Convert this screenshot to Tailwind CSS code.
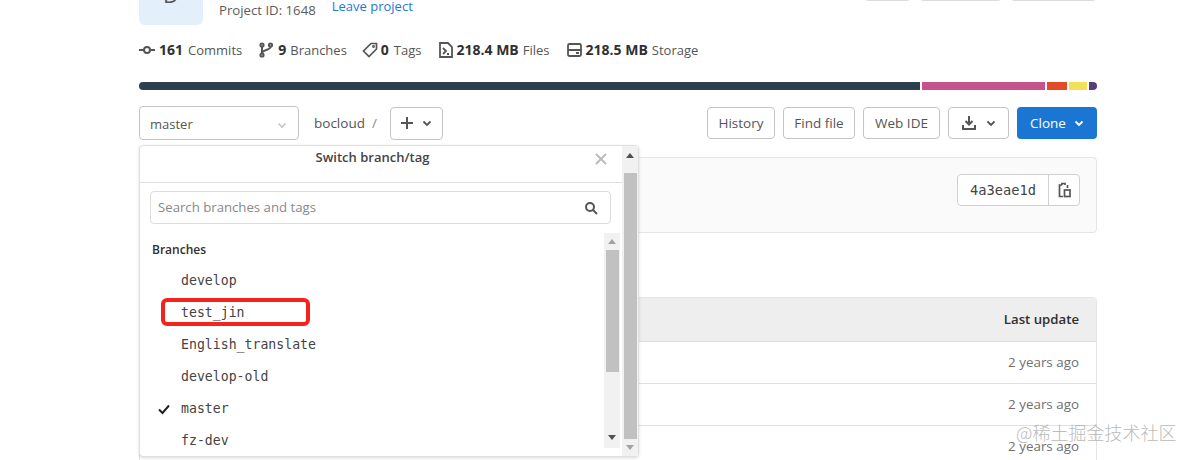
<!DOCTYPE html>
<html lang="en">
<head>
  <meta charset="UTF-8" />
  <title>bocloud</title>
  <script src="https://cdn.jsdelivr.net/npm/@tailwindcss/browser@4"></script>
</head>
<body class="bg-white">
  <div class="relative h-[460px] w-[1192px] overflow-hidden font-['Open_Sans','Noto_Sans',sans-serif] text-[13.5px] text-[#303030]">
    <main class="ml-[139px] w-[958px]">

      <!-- project header, cut off by the top of the picture -->
      <div class="-mt-[39px] flex h-[64px] items-start">
        <div class="flex h-[64px] w-[64px] items-end justify-center rounded-md bg-[#e3f0fb] pb-[20px] text-[22px] leading-none text-[#555]">D</div>
        <div class="ml-[16px] mt-[39px] text-[13.2px] leading-[20px] text-[#5c5c5c]">Project ID: 1648</div>
        <a class="ml-[16px] mt-[35px] text-[13px] leading-[20px] text-[#1f78d1]">Leave project</a>
        <div class="ml-auto flex items-start gap-[8px] pt-[20px]">
          <div class="h-[20px] w-[47px] rounded border border-[#dcdcdc]"></div>
          <div class="flex h-[20px] w-[83px] rounded border border-[#dcdcdc]"><div class="w-[59px] border-r border-[#dcdcdc]"></div></div>
          <div class="flex h-[20px] w-[87px] rounded border border-[#dcdcdc]"><div class="w-[63px] border-r border-[#dcdcdc]"></div></div>
        </div>
      </div>

      <!-- stats -->
      <div class="mt-[15px] flex h-[20px] items-center text-[13px] text-[#555]">
        <svg class="mr-[4px] h-[16px] w-[16px]" viewBox="0 0 16 16" fill="none" stroke="#555" stroke-width="2"><circle cx="8" cy="8" r="3"/><path d="M0 8h5M11 8h5"/></svg>
        <span class="flex items-baseline"><b class="mr-[5px] text-[14px] font-bold text-[#303030]">161</b>Commits</span>
        <svg class="ml-[17px] mr-[5px] h-[16px] w-[14px]" viewBox="0 0 14 16" fill="none" stroke="#555" stroke-width="2"><circle cx="3" cy="3" r="1.6"/><circle cx="3" cy="13" r="1.6"/><circle cx="11.5" cy="3" r="1.6"/><path d="M3 5v6M11.5 5c0 3-8.500 3-8.500 6"/></svg>
        <span class="flex items-baseline"><b class="mr-[4px] text-[14px] font-bold text-[#303030]">9</b>Branches</span>
        <svg class="ml-[15px] mr-[3px] h-[16px] w-[16px]" viewBox="0 0 16 16" fill="none" stroke="#555" stroke-width="1.700"><path d="M9 1.500h5.500V7L7 14.500 1.500 9z"/><circle cx="11.500" cy="4.500" r="0.600"/></svg>
        <span class="flex items-baseline"><b class="mr-[5px] text-[14px] font-bold text-[#303030]">0</b>Tags</span>
        <svg class="ml-[17px] mr-[4px] h-[16px] w-[14px]" viewBox="0 0 14 16" fill="none" stroke="#555" stroke-width="1.800"><path d="M1 1h8l4 4v10H1z"/><path d="M4 6l3 3-3 3M8 12h2"/></svg>
        <span class="flex items-baseline"><b class="mr-[4px] text-[14px] font-bold text-[#303030]">218.4 MB</b>Files</span>
        <svg class="ml-[17px] mr-[4px] h-[16px] w-[15px]" viewBox="0 0 15 16" fill="none" stroke="#555" stroke-width="1.800"><rect x="1" y="2" width="13" height="12" rx="1.500"/><path d="M1 8h13M9 11h3"/></svg>
        <span class="flex items-baseline"><b class="mr-[4px] text-[14px] font-bold text-[#303030]">218.5 MB</b>Storage</span>
      </div>

      <!-- language bar -->
      <div class="mt-[22px] flex h-[8px] gap-[2px] overflow-hidden rounded-full">
        <div class="w-[781px] bg-[#2c3e50]"></div>
        <div class="w-[123px] bg-[#c6538c]"></div>
        <div class="w-[20px] bg-[#e34c26]"></div>
        <div class="w-[18px] bg-[#f1e05a]"></div>
        <div class="w-[8px] bg-[#563d7c]"></div>
      </div>

      <!-- toolbar -->
      <div class="mt-[16px] flex h-[34px] items-center">
        <div class="flex h-[34px] w-[160px] items-center justify-between rounded border border-[#c4c4c4] pl-[10px] pr-[11px] pt-[3px] text-[13px] text-[#555]">
          master
          <svg class="h-[10px] w-[10px]" viewBox="0 0 10 10" fill="none" stroke="#c4c4c4" stroke-width="1.600"><path d="M1.500 3.500L5 7l3.500-3.500"/></svg>
        </div>
        <span class="ml-[15px] text-[#555]">bocloud</span>
        <span class="ml-[7px] text-[#888]">/</span>
        <div class="ml-[13px] flex h-[33px] w-[53px] items-center justify-center gap-[8px] rounded border border-[#c4c4c4]">
          <svg class="h-[14px] w-[14px]" viewBox="0 0 14 14" fill="none" stroke="#555" stroke-width="2"><path d="M7 1v12M1 7h12"/></svg>
          <svg class="h-[10px] w-[10px]" viewBox="0 0 10 10" fill="none" stroke="#555" stroke-width="1.800"><path d="M1.500 3.500L5 7l3.500-3.500"/></svg>
        </div>
        <div class="ml-auto flex gap-[8px] text-[#555]">
          <div class="flex h-[32px] w-[68px] items-center justify-center rounded border border-[#c4c4c4]">History</div>
          <div class="flex h-[32px] w-[72px] items-center justify-center rounded border border-[#c4c4c4]">Find file</div>
          <div class="flex h-[32px] w-[77px] items-center justify-center rounded border border-[#c4c4c4]">Web IDE</div>
          <div class="flex h-[32px] w-[61px] items-center justify-center gap-[10px] rounded border border-[#c4c4c4]">
            <svg class="h-[14px] w-[14px]" viewBox="0 0 14 14" fill="none" stroke="#555" stroke-width="2"><path d="M7 0v8M3.500 5L7 8.500 10.500 5M1 9v4h12V9"/></svg>
            <svg class="h-[10px] w-[10px]" viewBox="0 0 10 10" fill="none" stroke="#555" stroke-width="1.800"><path d="M1.500 3.500L5 7l3.500-3.500"/></svg>
          </div>
          <div class="flex h-[32px] w-[80px] items-center justify-center gap-[8px] rounded bg-[#1b76d3] text-white">
            Clone
            <svg class="h-[10px] w-[10px]" viewBox="0 0 10 10" fill="none" stroke="#fff" stroke-width="1.800"><path d="M1.500 3.500L5 7l3.500-3.500"/></svg>
          </div>
        </div>
      </div>

      <!-- last commit box -->
      <div class="mt-[17px] flex h-[76px] items-start justify-end rounded border border-[#e5e5e5] bg-[#fafafa] pr-[16px] pt-[16px]">
        <div class="flex h-[32px] w-[123px] rounded border border-[#d0d0d0] bg-white">
          <div class="flex w-[91px] items-center justify-center border-r border-[#d0d0d0] font-['DejaVu_Sans_Mono',monospace] text-[13.7px] text-[#444]">4a3eae1d</div>
          <div class="flex flex-1 items-center justify-center">
            <svg class="h-[16px] w-[13px]" viewBox="0 0 13 16" fill="none" stroke="#555" stroke-width="1.700"><path d="M4 3H1.500v11.500H5M4 3V1.500h3V3M9.500 3v3"/><rect x="6.500" y="8" width="5.500" height="6.500"/></svg>
          </div>
        </div>
      </div>

      <!-- file table -->
      <div class="mt-[64px] rounded border border-[#e5e5e5]">
        <div class="flex h-[43px] items-center justify-end bg-[#eeeeee] pr-[17px] text-[13.2px] font-semibold text-[#303030]">Last update</div>
        <div class="flex h-[42px] items-center justify-end border-t border-[#e0e0e0] pr-[17px] text-[13.4px] text-[#707070]">2 years ago</div>
        <div class="flex h-[42px] items-center justify-end border-t border-[#e0e0e0] pr-[17px] text-[13.4px] text-[#707070]">2 years ago</div>
        <div class="flex h-[42px] items-center justify-end border-t border-[#e0e0e0] pr-[17px] text-[13.4px] text-[#707070]">2 years ago</div>
      </div>
    </main>

    <!-- branch dropdown -->
    <div class="absolute left-[139px] top-[145px] flex h-[312px] w-[500px] rounded border border-[#e0e0e0] bg-white shadow-[0_1px_3px_rgba(0,0,0,0.15)]">
      <div class="flex w-[482px] flex-col">
        <div class="relative h-[37px] border-b border-[#e0e0e0] pr-[17px] text-center text-[13px] font-semibold leading-[22px] text-[#444]">
          Switch branch/tag
          <svg class="absolute right-[14px] top-[6px] h-[14px] w-[14px]" viewBox="0 0 14 14" fill="none" stroke="#bbb" stroke-width="2"><path d="M2 2l10 10M12 2L2 12"/></svg>
        </div>
        <div class="ml-[10px] mr-[11px] mt-[8px] flex h-[33px] items-center justify-between rounded-sm border border-[#dcdcdc] pl-[7px] pr-[12px] text-[13.2px] text-[#8a8a8a]">
          Search branches and tags
          <svg class="h-[14px] w-[14px]" viewBox="0 0 14 14" fill="none" stroke="#555" stroke-width="2"><circle cx="6" cy="6" r="4"/><path d="M9 9l4 4"/></svg>
        </div>
        <div class="mt-[9px] flex h-[215px]">
          <div class="flex-1 font-['DejaVu_Sans_Mono',monospace] text-[13.2px] text-[#444]">
            <div class="h-[32px] pl-[12px] pt-[7px] font-['Open_Sans','Noto_Sans',sans-serif] text-[12px] font-semibold leading-[20px] text-[#303030]">Branches</div>
            <div class="flex h-[32px] items-center pl-[41px]">develop</div>
            <div class="flex h-[32px] items-center pl-[41px]">test_jin</div>
            <div class="flex h-[32px] items-center pl-[41px]">English_translate</div>
            <div class="flex h-[32px] items-center pl-[41px]">develop-old</div>
            <div class="flex h-[32px] items-center pl-[18px]">
              <svg class="mr-[11px] h-[12px] w-[12px]" viewBox="0 0 12 12" fill="none" stroke="#222" stroke-width="2"><path d="M1 6.500L4.500 10 11 2.500"/></svg>master
            </div>
            <div class="flex h-[23px] items-start overflow-visible pl-[41px] pt-[5px] leading-[22px]">fz-dev</div>
          </div>
          <!-- inner scrollbar -->
          <div class="mr-[2px] flex w-[16px] flex-col items-center bg-[#f1f1f1]">
            <svg class="mt-[6px] h-[5px] w-[8px]" viewBox="0 0 8 5" fill="#a3a3a3"><path d="M4 0l4 5H0z"/></svg>
            <div class="ml-[1px] mt-[6px] h-[122px] w-[13px] bg-[#c1c1c1]"></div>
            <svg class="mt-auto mb-[8px] h-[5px] w-[8px]" viewBox="0 0 8 5" fill="#505050"><path d="M4 5L8 0H0z"/></svg>
          </div>
        </div>
      </div>
      <!-- outer scrollbar -->
      <div class="flex w-[16px] flex-col items-center bg-[#f1f1f1]">
        <svg class="mt-[7px] h-[5px] w-[8px]" viewBox="0 0 8 5" fill="#505050"><path d="M4 0l4 5H0z"/></svg>
        <div class="mt-[15px] h-[266px] w-[13px] bg-[#c1c1c1]"></div>
        <svg class="mt-[6px] h-[5px] w-[8px]" viewBox="0 0 8 5" fill="#a3a3a3"><path d="M4 5L8 0H0z"/></svg>
      </div>
    </div>

    <!-- red annotation -->
    <div class="absolute left-[161px] top-[298px] h-[28px] w-[149px] rounded-[6px] border-[4px] border-[#f5231c]"></div>

    <!-- watermark -->
    <div class="absolute left-[1016px] top-[421px] font-['Noto_Sans_CJK_SC',sans-serif] text-[18px] font-light leading-[22px] text-[#a8a8a8]/80">@稀土掘金技术社区</div>
  </div>
</body>
</html>
